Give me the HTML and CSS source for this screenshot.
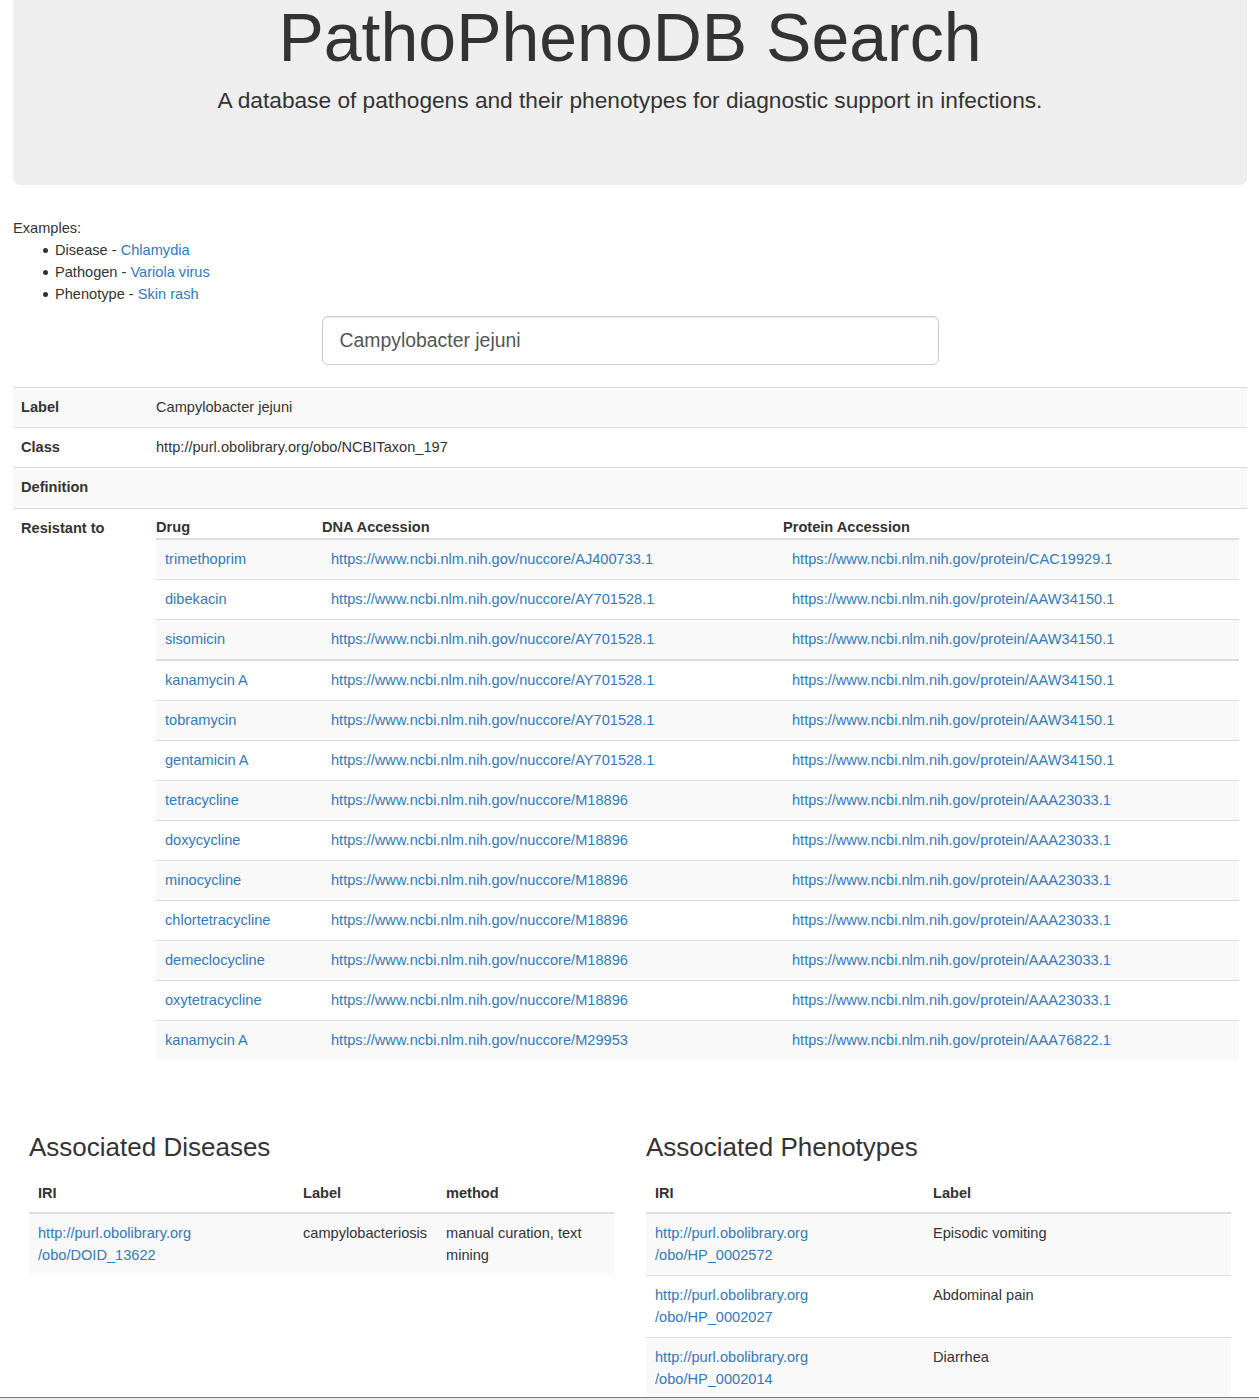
FILE: index.html
```html
<!DOCTYPE html>
<html>
<head>
<meta charset="utf-8">
<title>PathoPhenoDB Search</title>
<link rel="stylesheet" href="styles.css">
</head>
<body>
<div class="page">
  <div class="jumbotron">
    <h1>PathoPhenoDB Search</h1>
    <p class="lead">A database of pathogens and their phenotypes for diagnostic support in infections.</p>
  </div>

  <div class="examples">
    <div>Examples:</div>
    <ul>
      <li>Disease - <a href="#">Chlamydia</a></li>
      <li>Pathogen - <a href="#">Variola virus</a></li>
      <li>Phenotype - <a href="#">Skin rash</a></li>
    </ul>
  </div>

  <div class="search">
    <input class="search-input" type="text" value="Campylobacter jejuni">
  </div>

  <table class="info">
    <tbody>
      <tr class="odd"><th>Label</th><td>Campylobacter jejuni</td></tr>
      <tr><th>Class</th><td>http://purl.obolibrary.org/obo/NCBITaxon_197</td></tr>
      <tr class="odd def"><th>Definition</th><td></td></tr>
      <tr>
        <th>Resistant to</th>
        <td class="nested-cell">
          <table class="nested">
            <thead>
              <tr><th class="c1">Drug</th><th class="c2">DNA Accession</th><th class="c3">Protein Accession</th></tr>
            </thead>
            <tbody>
              <tr class="odd"><td><a href="#">trimethoprim</a></td><td><a href="#">https://www.ncbi.nlm.nih.gov/nuccore/AJ400733.1</a></td><td><a href="#">https://www.ncbi.nlm.nih.gov/protein/CAC19929.1</a></td></tr>
              <tr><td><a href="#">dibekacin</a></td><td><a href="#">https://www.ncbi.nlm.nih.gov/nuccore/AY701528.1</a></td><td><a href="#">https://www.ncbi.nlm.nih.gov/protein/AAW34150.1</a></td></tr>
              <tr class="odd"><td><a href="#">sisomicin</a></td><td><a href="#">https://www.ncbi.nlm.nih.gov/nuccore/AY701528.1</a></td><td><a href="#">https://www.ncbi.nlm.nih.gov/protein/AAW34150.1</a></td></tr>
              <tr class="thick"><td><a href="#">kanamycin A</a></td><td><a href="#">https://www.ncbi.nlm.nih.gov/nuccore/AY701528.1</a></td><td><a href="#">https://www.ncbi.nlm.nih.gov/protein/AAW34150.1</a></td></tr>
              <tr class="odd"><td><a href="#">tobramycin</a></td><td><a href="#">https://www.ncbi.nlm.nih.gov/nuccore/AY701528.1</a></td><td><a href="#">https://www.ncbi.nlm.nih.gov/protein/AAW34150.1</a></td></tr>
              <tr><td><a href="#">gentamicin A</a></td><td><a href="#">https://www.ncbi.nlm.nih.gov/nuccore/AY701528.1</a></td><td><a href="#">https://www.ncbi.nlm.nih.gov/protein/AAW34150.1</a></td></tr>
              <tr class="odd"><td><a href="#">tetracycline</a></td><td><a href="#">https://www.ncbi.nlm.nih.gov/nuccore/M18896</a></td><td><a href="#">https://www.ncbi.nlm.nih.gov/protein/AAA23033.1</a></td></tr>
              <tr><td><a href="#">doxycycline</a></td><td><a href="#">https://www.ncbi.nlm.nih.gov/nuccore/M18896</a></td><td><a href="#">https://www.ncbi.nlm.nih.gov/protein/AAA23033.1</a></td></tr>
              <tr class="odd"><td><a href="#">minocycline</a></td><td><a href="#">https://www.ncbi.nlm.nih.gov/nuccore/M18896</a></td><td><a href="#">https://www.ncbi.nlm.nih.gov/protein/AAA23033.1</a></td></tr>
              <tr><td><a href="#">chlortetracycline</a></td><td><a href="#">https://www.ncbi.nlm.nih.gov/nuccore/M18896</a></td><td><a href="#">https://www.ncbi.nlm.nih.gov/protein/AAA23033.1</a></td></tr>
              <tr class="odd"><td><a href="#">demeclocycline</a></td><td><a href="#">https://www.ncbi.nlm.nih.gov/nuccore/M18896</a></td><td><a href="#">https://www.ncbi.nlm.nih.gov/protein/AAA23033.1</a></td></tr>
              <tr><td><a href="#">oxytetracycline</a></td><td><a href="#">https://www.ncbi.nlm.nih.gov/nuccore/M18896</a></td><td><a href="#">https://www.ncbi.nlm.nih.gov/protein/AAA23033.1</a></td></tr>
              <tr class="odd"><td><a href="#">kanamycin A</a></td><td><a href="#">https://www.ncbi.nlm.nih.gov/nuccore/M29953</a></td><td><a href="#">https://www.ncbi.nlm.nih.gov/protein/AAA76822.1</a></td></tr>
            </tbody>
          </table>
        </td>
      </tr>
    </tbody>
  </table>

  <div class="assoc">
    <div class="col">
      <h3>Associated Diseases</h3>
      <table class="list">
        <thead>
          <tr><th class="d1">IRI</th><th class="d2">Label</th><th class="d3">method</th></tr>
        </thead>
        <tbody>
          <tr class="odd"><td><a href="#">http://purl.obolibrary.org<br>/obo/DOID_13622</a></td><td>campylobacteriosis</td><td>manual curation, text mining</td></tr>
        </tbody>
      </table>
    </div>
    <div class="col">
      <h3>Associated Phenotypes</h3>
      <table class="list">
        <thead>
          <tr><th class="p1">IRI</th><th class="p2">Label</th></tr>
        </thead>
        <tbody>
          <tr class="odd"><td><a href="#">http://purl.obolibrary.org<br>/obo/HP_0002572</a></td><td>Episodic vomiting</td></tr>
          <tr><td><a href="#">http://purl.obolibrary.org<br>/obo/HP_0002027</a></td><td>Abdominal pain</td></tr>
          <tr class="odd"><td><a href="#">http://purl.obolibrary.org<br>/obo/HP_0002014</a></td><td>Diarrhea</td></tr>
        </tbody>
      </table>
    </div>
  </div>
</div>
<div class="hscroll"></div>
</body>
</html>
```
FILE: styles.css
```css
html, body {
  margin: 0;
  padding: 0;
}
body {
  font-family: "Liberation Sans", Arial, Helvetica, sans-serif;
  font-size: 14.6px;
  line-height: 22px;
  color: #333;
  background: #fff;
}
a {
  color: #337ab7;
  text-decoration: none;
}
.page {
  padding: 0 12px 60px 13px;
}
.jumbotron {
  background: #eee;
  border-radius: 0 0 7px 7px;
  text-align: center;
  padding: 0 0 69px;
}
.jumbotron h1 {
  margin: 0;
  font-size: 68px;
  font-weight: 400;
  line-height: 75px;
}
.lead {
  margin: 9.5px 0 0;
  font-size: 22.7px;
  line-height: 31.5px;
}
.examples {
  margin-top: 31.5px;
}
.examples ul {
  margin: 0;
  padding-left: 42px;
  list-style: none;
}
.examples li {
  position: relative;
}
.examples li::before {
  content: "";
  position: absolute;
  left: -12px;
  top: 9px;
  width: 5px;
  height: 5px;
  border-radius: 50%;
  background: #333;
}
.search {
  width: 617px;
  margin: 11.5px auto 22px;
}
.search-input {
  display: block;
  box-sizing: border-box;
  width: 100%;
  height: 49px;
  border: 1px solid #ccc;
  border-radius: 6px;
  padding: 0 17px;
  font-family: inherit;
  font-size: 19.4px;
  color: #555;
  background: #fff;
  box-shadow: inset 0 1px 1px rgba(0, 0, 0, .075);
  outline: none;
}
table {
  border-collapse: collapse;
  border-spacing: 0;
}
.info {
  width: 100%;
}
.info > tbody > tr > th,
.info > tbody > tr > td {
  border-top: 1px solid #ddd;
  padding: 8px 8px 9px;
  text-align: left;
  vertical-align: top;
}
.info > tbody > tr.def > th,
.info > tbody > tr.def > td {
  padding-bottom: 10px;
}
.info > tbody > tr > td.nested-cell {
  padding-top: 7px;
}
.info > tbody > tr > th {
  width: 119px;
  font-weight: bold;
}
.info > tbody > tr.odd > th,
.info > tbody > tr.odd > td {
  background: #f9f9f9;
}
.nested {
  width: 100%;
}
.nested thead th {
  padding: 0;
  text-align: left;
  font-weight: bold;
  border-bottom: 2px solid #ddd;
  vertical-align: bottom;
}
.nested .c1 { width: 166px; }
.nested .c2 { width: 461px; }
.nested tbody td {
  padding: 8px 9px 9px;
  border-top: 1px solid #ddd;
  vertical-align: top;
}
.nested tbody tr.thick td {
  border-top: 2px solid #ddd;
}
.nested tbody tr.odd td {
  background: #f9f9f9;
}
.assoc {
  display: grid;
  grid-template-columns: 1fr 1fr;
  margin-top: 63.5px;
}
.col {
  padding: 0 16px;
}
.col h3 {
  margin: 0 0 12.5px;
  font-size: 26px;
  font-weight: 400;
  line-height: 28.6px;
}
.list {
  width: 100%;
}
.list th {
  text-align: left;
  font-weight: bold;
  padding: 8px 9px;
  border-bottom: 2px solid #ddd;
  vertical-align: bottom;
}
.list td {
  padding: 8px 9px 9px;
  border-top: 1px solid #ddd;
  vertical-align: top;
}
.list tr.odd td {
  background: #f9f9f9;
}
.list .d1 { width: 247px; }
.list .d2 { width: 125px; }
.list .p1 { width: 260px; }
.hscroll {
  position: fixed;
  left: 0;
  right: 0;
  bottom: 0;
  height: 2px;
  border-top: 1px solid #7b7b7b;
  background: #ececec;
}
```
